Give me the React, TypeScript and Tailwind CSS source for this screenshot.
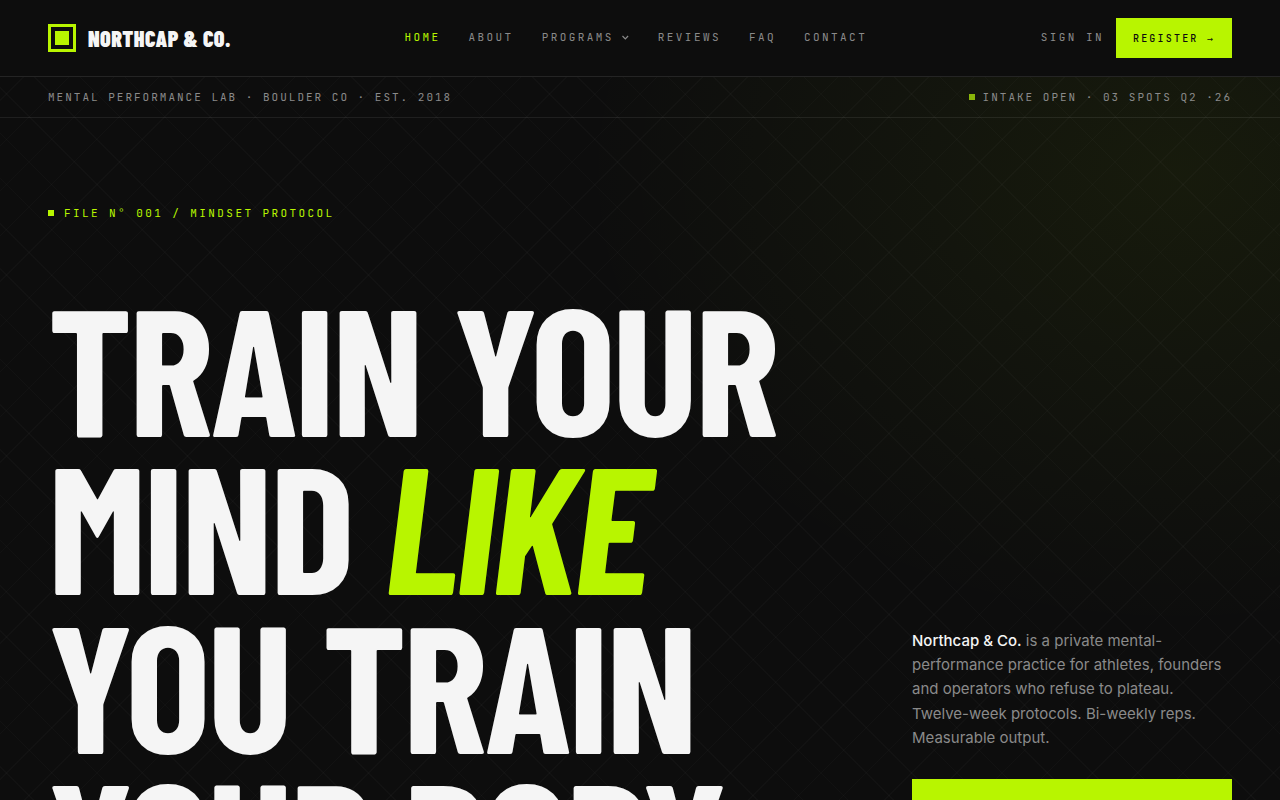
const NAV_LINKS = [
  { label: 'Home', href: '#home', active: true },
  { label: 'About', href: '#about' },
  { label: 'Programs', href: '#programs', menu: true },
  { label: 'Reviews', href: '#reviews' },
  { label: 'FAQ', href: '#faq' },
  { label: 'Contact', href: '#contact' },
]

function Arrow() {
  return <span className="font-['DejaVu_Sans_Mono',monospace]">→</span>
}

function Logo() {
  return (
    <a href="#home" className="flex items-center gap-3">
      <span className="w-7 h-7 border-3 border-[#b8f500] p-1">
        <span className="block w-full h-full bg-[#b8f500]" />
      </span>
      <span className="font-['Barlow_Condensed','Roboto',sans-serif] font-black text-[22px] leading-7 tracking-[0.02em] uppercase">
        Northcap &amp; Co.
      </span>
    </a>
  )
}

function Header() {
  return (
    <header className="relative flex items-center justify-between px-12 py-[18px] bg-[#0d0d0d] border-b border-[#242424]">
      <Logo />

      <nav className="flex gap-7">
        {NAV_LINKS.map((link) => (
          <a
            key={link.label}
            href={link.href}
            className={`flex items-center gap-2 pb-0.5 text-[11px] leading-4 tracking-[0.22em] uppercase ${link.active ? 'text-[#b8f500]' : 'text-[#8a8a8a]'}`}
          >
            {link.label}
            {link.menu && (
              <svg width="8" height="8" viewBox="0 0 8 8" fill="none" stroke="currentColor" strokeWidth="1.2">
                <path d="M0.5 3l2.8 2.8 2.8-2.8" />
              </svg>
            )}
          </a>
        ))}
      </nav>

      <div className="flex items-center gap-3">
        <a href="#signin" className="pb-0.5 text-[11px] leading-4 tracking-[0.22em] uppercase text-[#8a8a8a]">
          Sign in
        </a>
        <button className="h-10 px-[17px] bg-[#b8f500] text-[#0d0d0d] text-[10px] font-medium tracking-[0.22em] uppercase">
          Register <Arrow />
        </button>
      </div>
    </header>
  )
}

export default function App() {
  return (
    <div className="min-h-screen bg-[#0d0d0d] text-[#f5f5f5] font-['JetBrains_Mono','DejaVu_Sans_Mono',monospace]">
      <Header />

      <main className="bg-[repeating-linear-gradient(45deg,transparent_0_31px,rgba(255,255,255,0.02)_31px_32px),repeating-linear-gradient(-45deg,transparent_0_31px,rgba(255,255,255,0.02)_31px_32px),radial-gradient(ellipse_600px_460px_at_92%_95px,rgba(184,245,0,0.06),transparent)]">
        {/* status strip */}
        <div className="flex items-center justify-between px-12 py-3 border-b border-white/8 text-[11px] leading-4 tracking-[2px] uppercase text-[#8a8a8a]">
          <span>Mental Performance Lab · Boulder CO · Est. 2018</span>
          <span className="flex items-center gap-2">
            <span className="w-1.5 h-1.5 bg-[#8ab50a]" />
            Intake open · 03 spots Q2 ·26
          </span>
        </div>

        <section className="px-12 pt-[87px] pb-[72px]">
          <p className="flex items-center gap-2.5 text-[11px] leading-4 tracking-[0.22em] uppercase text-[#b8f500]">
            <span className="w-1.5 h-1.5 bg-[#b8f500]" />
            File N° 001 / Mindset Protocol
          </p>

          <div className="mt-[65px] grid grid-cols-[1fr_320px] gap-12 items-end">
            <h1 className="font-['Barlow_Condensed','Roboto',sans-serif] font-bold text-[180px] leading-[0.88] tracking-[-0.02em] uppercase whitespace-nowrap">
              Train your
              <br />
              mind <em className="text-[#b8f500]">like</em>
              <br />
              you train
              <br />
              your body.
            </h1>

            <div className="pb-[25px]">
              <p className="font-['Inter',sans-serif] text-[15px] leading-relaxed text-[#8a8a8a]">
                <strong className="font-medium text-[#f5f5f5]">Northcap &amp; Co.</strong> is a private
                mental-performance practice for athletes, founders and operators who refuse to plateau. Twelve-week
                protocols. Bi-weekly reps. Measurable output.
              </p>
              <button className="mt-7 w-full h-[52px] bg-[#b8f500] text-[#0d0d0d] text-[11px] font-medium tracking-[0.22em] uppercase">
                Book a call <Arrow />
              </button>
              <button className="mt-3 w-full h-[52px] border border-[#333] text-[11px] tracking-[0.22em] uppercase">
                View programs
              </button>
            </div>
          </div>
        </section>
      </main>
    </div>
  )
}
